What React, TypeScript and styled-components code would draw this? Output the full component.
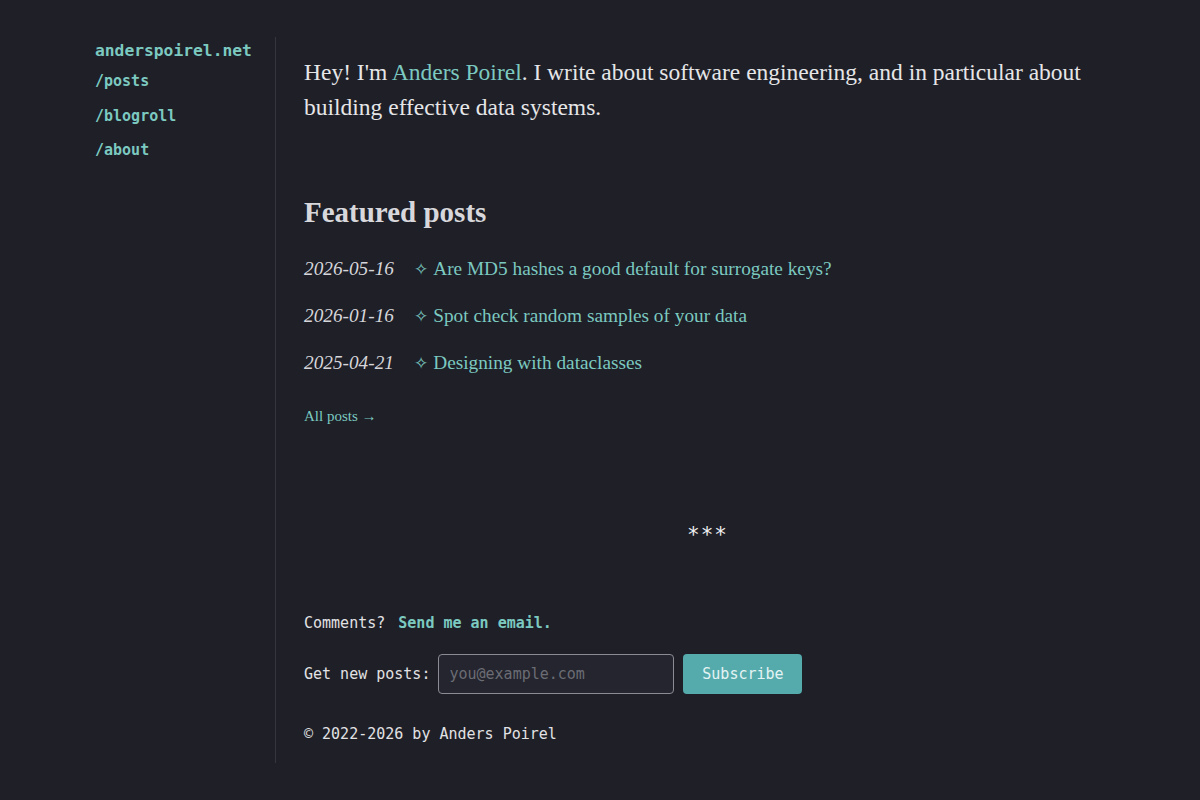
import React from "react";
import styled, { createGlobalStyle } from "styled-components";

const GlobalStyle = createGlobalStyle`
  html, body {
    margin: 0;
    padding: 0;
    background: #1e1f27;
    color: #e2e2e4;
  }
  body {
    font-family: "Liberation Serif", serif;
  }
  a { text-decoration: none; }
`;

const Page = styled.div`
  width: 1010px;
  margin: 0 auto;
  padding: 37px 0 36px;
  display: grid;
  grid-template-columns: 181px 1fr;
`;

const Sidebar = styled.nav`
  border-right: 1px solid #34353e;
  padding-top: 4px;
  display: flex;
  flex-direction: column;
  font-family: "DejaVu Sans Mono", monospace;
  font-weight: bold;
`;

const SiteName = styled.a`
  color: #7cc9c0;
  font-size: 16.3px;
  line-height: 20px;
  margin-bottom: 10px;
`;

const NavLink = styled.a`
  color: #7cc9c0;
  font-size: 15px;
  line-height: 20px;
  margin-bottom: 14.5px;
`;

const Main = styled.main`
  padding-left: 28px;
  padding-bottom: 17px;
  display: flex;
  flex-direction: column;
`;

const Intro = styled.p`
  margin: 18px 0 0;
  font-size: 23.5px;
  line-height: 35px;
  color: #e6e6e8;
`;

const Accent = styled.a`
  color: #7cc9c0;
`;

const Heading = styled.h2`
  margin: 69px 0 0;
  font-size: 29px;
  line-height: 36px;
  font-weight: bold;
  color: #d8d8dc;
`;

const PostList = styled.ul`
  list-style: none;
  margin: 26px 0 0;
  padding: 0;
  display: flex;
  flex-direction: column;
  gap: 21px;
`;

const PostRow = styled.li`
  display: flex;
  align-items: baseline;
  font-size: 19.3px;
  line-height: 26px;
`;

const PostDate = styled.span`
  font-style: italic;
  color: #d6d6da;
  width: 110px;
  flex: none;
`;

const Sparkle = styled.span`
  color: #7cc9c0;
  margin-right: 5px;
  font-family: "DejaVu Sans", sans-serif;
  font-size: 17px;
`;

const PostTitle = styled.a`
  color: #7cc9c0;
`;

const AllPosts = styled.a`
  margin-top: 30px;
  color: #7cc9c0;
  font-size: 15px;
  line-height: 20px;
`;

const Divider = styled.div`
  margin-top: 97px;
  padding-left: 6px;
  text-align: center;
  font-family: "DejaVu Sans Mono", monospace;
  font-size: 21px;
  line-height: 24px;
  color: #f0f0f2;
  letter-spacing: 1px;
`;

const Mono = styled.div`
  font-family: "DejaVu Sans Mono", monospace;
  font-size: 15px;
  color: #e2e2e4;
`;

const Comments = styled(Mono)`
  margin-top: 64px;
  line-height: 24px;
`;

const EmailLink = styled.a`
  color: #7cc9c0;
  font-weight: bold;
  margin-left: 4px;
`;

const SubscribeRow = styled(Mono)`
  margin-top: 19px;
  display: flex;
  align-items: center;
`;

const EmailInput = styled.input`
  margin-left: 8px;
  width: 236px;
  height: 40px;
  box-sizing: border-box;
  padding: 0 10px;
  background: #24252e;
  border: 1px solid #8b8c93;
  border-radius: 4px;
  color: #e2e2e4;
  font-family: "DejaVu Sans Mono", monospace;
  font-size: 15px;
  outline: none;
  &::placeholder {
    color: #6b6c74;
  }
`;

const SubscribeButton = styled.button`
  margin-left: 9px;
  width: 119px;
  height: 40px;
  border: none;
  border-radius: 4px;
  background: #55abac;
  color: #e4f3f3;
  font-family: "DejaVu Sans Mono", monospace;
  font-size: 15px;
  cursor: pointer;
`;

const Copyright = styled(Mono)`
  margin-top: 28px;
  line-height: 24px;
`;

const posts = [
  { date: "2026-05-16", title: "Are MD5 hashes a good default for surrogate keys?" },
  { date: "2026-01-16", title: "Spot check random samples of your data" },
  { date: "2025-04-21", title: "Designing with dataclasses" },
];

export default function App() {
  return (
    <>
      <GlobalStyle />
      <Page>
        <Sidebar>
          <SiteName href="#">anderspoirel.net</SiteName>
          <NavLink href="#">/posts</NavLink>
          <NavLink href="#">/blogroll</NavLink>
          <NavLink href="#">/about</NavLink>
        </Sidebar>
        <Main>
          <Intro>
            Hey! I'm <Accent href="#">Anders Poirel</Accent>. I write about software engineering, and in
            particular about building effective data systems.
          </Intro>
          <Heading>Featured posts</Heading>
          <PostList>
            {posts.map((p) => (
              <PostRow key={p.date}>
                <PostDate>{p.date}</PostDate>
                <Sparkle>✧</Sparkle>
                <PostTitle href="#">{p.title}</PostTitle>
              </PostRow>
            ))}
          </PostList>
          <AllPosts href="#">All posts →</AllPosts>
          <Divider>***</Divider>
          <Comments>
            Comments? <EmailLink href="#">Send me an email.</EmailLink>
          </Comments>
          <SubscribeRow>
            Get new posts:
            <EmailInput type="email" placeholder="you@example.com" />
            <SubscribeButton>Subscribe</SubscribeButton>
          </SubscribeRow>
          <Copyright>© 2022-2026 by Anders Poirel</Copyright>
        </Main>
      </Page>
    </>
  );
}
